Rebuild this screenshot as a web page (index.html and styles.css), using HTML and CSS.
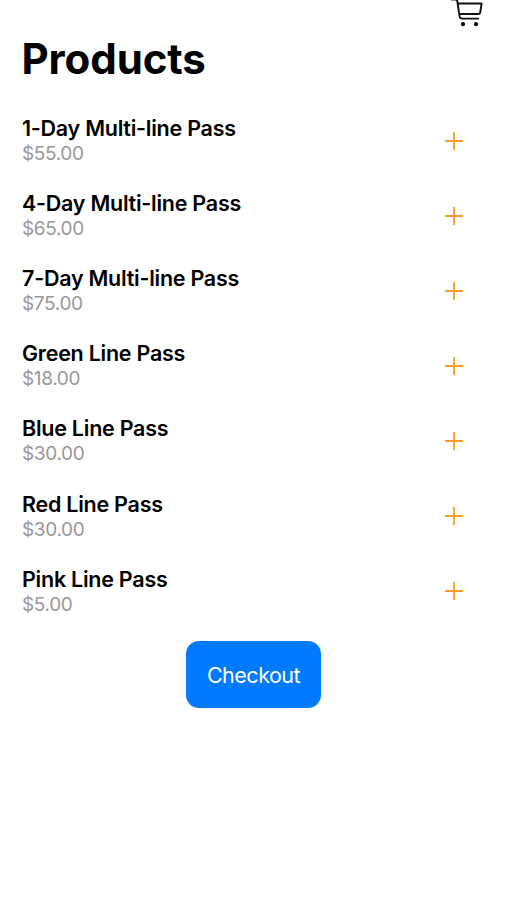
FILE: index.html
```html
<!DOCTYPE html>
<html lang="en">
<head>
<meta charset="utf-8">
<title>Products</title>
<link rel="stylesheet" href="styles.css">
</head>
<body>
<header class="toolbar">
<svg class="cart" width="34" height="28" viewBox="0 0 34 28" fill="none" stroke="#111" stroke-width="1.9" stroke-linecap="round" stroke-linejoin="round"><path d="M2 -.4H5.5Q7 -.4 7.3 1L9.6 16.4Q10 18.6 12 18.6H28.3M8 3.5H31.6L30.3 12Q30 14 28 14H9.4"/><circle cx="13" cy="24.2" r="1.2" fill="#111"/><circle cx="26" cy="24.2" r="1.2" fill="#111"/></svg>
</header>
<main class="page">
<h1 class="title">Products</h1>
<ul class="products">
<li class="product"><div><div class="name">1-Day Multi-line Pass</div><div class="price">$55.00</div></div><svg class="plus" viewBox="0 0 18 18"><path d="M9 0V18M0 9H18"/></svg></li>
<li class="product"><div><div class="name">4-Day Multi-line Pass</div><div class="price">$65.00</div></div><svg class="plus" viewBox="0 0 18 18"><path d="M9 0V18M0 9H18"/></svg></li>
<li class="product"><div><div class="name">7-Day Multi-line Pass</div><div class="price">$75.00</div></div><svg class="plus" viewBox="0 0 18 18"><path d="M9 0V18M0 9H18"/></svg></li>
<li class="product"><div><div class="name">Green Line Pass</div><div class="price">$18.00</div></div><svg class="plus" viewBox="0 0 18 18"><path d="M9 0V18M0 9H18"/></svg></li>
<li class="product"><div><div class="name">Blue Line Pass</div><div class="price">$30.00</div></div><svg class="plus" viewBox="0 0 18 18"><path d="M9 0V18M0 9H18"/></svg></li>
<li class="product"><div><div class="name">Red Line Pass</div><div class="price">$30.00</div></div><svg class="plus" viewBox="0 0 18 18"><path d="M9 0V18M0 9H18"/></svg></li>
<li class="product"><div><div class="name">Pink Line Pass</div><div class="price">$5.00</div></div><svg class="plus" viewBox="0 0 18 18"><path d="M9 0V18M0 9H18"/></svg></li>
</ul>
<button class="checkout">Checkout</button>
</main>
</body>
</html>
```
FILE: styles.css
```css
* { box-sizing: border-box; }
body { margin: 0; background: #fff; color: #000; font-family: Inter, sans-serif; }
.toolbar { display: flex; justify-content: flex-end; height: 34px; padding-right: 23px; }
.page { display: flex; flex-direction: column; }
.title { margin: 0; padding-left: 21.5px; height: 69px; font-size: 42px; line-height: 50px; font-weight: 700; letter-spacing: -0.1px; }
.products { list-style: none; margin: 0; padding: 0 44px 0 22px; }
.product { display: flex; align-items: center; justify-content: space-between; height: 75.1px; }
.name { font-size: 21.5px; line-height: 26px; font-weight: 600; letter-spacing: -0.25px; }
.price { font-size: 19px; line-height: 25px; color: #98989b; letter-spacing: -0.35px; }
.plus { width: 18px; height: 18px; fill: none; stroke: #f5a01d; stroke-width: 1.8; }
.checkout { align-self: center; width: 135px; height: 67px; margin-top: 12.2px; padding: 2px 0 0; border: 0; border-radius: 13px; background: #007aff; color: #fff; font: 400 21.5px Inter, sans-serif; letter-spacing: -0.5px; }
```
